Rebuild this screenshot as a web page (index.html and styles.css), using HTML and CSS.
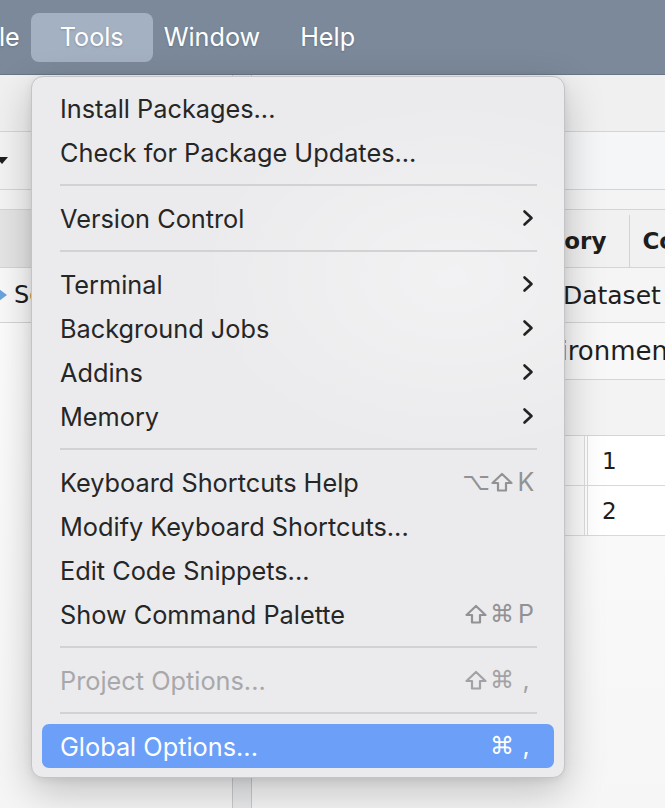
FILE: index.html
```html
<!DOCTYPE html>
<html lang="en">
<head>
<meta charset="utf-8">
<title>Tools menu</title>
<link rel="stylesheet" href="styles.css">
</head>
<body>
<div class="screen">
  <div class="menubar">
    <span class="mb-item first">File</span>
    <span class="mb-item active">Tools</span>
    <span class="mb-item">Window</span>
    <span class="mb-item">Help</span>
  </div>

  <div class="workspace">
    <div class="pane pane-left">
      <div class="row toolbar"></div>
      <div class="row subbar"><span class="caret"></span></div>
      <div class="row thin"></div>
      <div class="row tabs tabs-left"></div>
      <div class="row files"><span class="tri"></span><span class="files-text">Source on Save</span></div>
    </div>
    <div class="splitter"></div>
    <div class="pane pane-right">
      <div class="row toolbar toolbar-right"></div>
      <div class="row subbar subbar-right"></div>
      <div class="row thin"></div>
      <div class="row tabs tabs-right">
        <span class="tab">Environment</span>
        <span class="tab">History</span>
        <span class="tab">Connections</span>
      </div>
      <div class="row import"><span>Import Dataset</span></div>
      <div class="row envrow"><span>Global Environment</span></div>
      <div class="row empty"></div>
      <div class="trow"><span class="c1"></span><span class="c2">1</span></div>
      <div class="trow"><span class="c1"></span><span class="c2">2</span></div>
    </div>
  </div>

  <div class="menu">
    <div class="item"><span class="label">Install Packages...</span></div>
    <div class="item"><span class="label">Check for Package Updates...</span></div>
    <div class="sep"></div>
    <div class="item"><span class="label">Version Control</span><svg class="chev" viewBox="0 0 12 18" width="12" height="18"><path d="M2.5 2.5 L9.5 9 L2.5 15.5"/></svg></div>
    <div class="sep"></div>
    <div class="item"><span class="label">Terminal</span><svg class="chev" viewBox="0 0 12 18" width="12" height="18"><path d="M2.5 2.5 L9.5 9 L2.5 15.5"/></svg></div>
    <div class="item"><span class="label">Background Jobs</span><svg class="chev" viewBox="0 0 12 18" width="12" height="18"><path d="M2.5 2.5 L9.5 9 L2.5 15.5"/></svg></div>
    <div class="item"><span class="label">Addins</span><svg class="chev" viewBox="0 0 12 18" width="12" height="18"><path d="M2.5 2.5 L9.5 9 L2.5 15.5"/></svg></div>
    <div class="item"><span class="label">Memory</span><svg class="chev" viewBox="0 0 12 18" width="12" height="18"><path d="M2.5 2.5 L9.5 9 L2.5 15.5"/></svg></div>
    <div class="sep"></div>
    <div class="item"><span class="label">Keyboard Shortcuts Help</span><span class="keys"><span class="mod">⌥</span><span class="mod"><svg class="shift" viewBox="0 0 22 20" width="22" height="20"><path d="M11 2 L20.5 11 L15 11 L15 18.5 L7 18.5 L7 11 L1.5 11 Z"/></svg></span><span class="key">K</span></span></div>
    <div class="item"><span class="label">Modify Keyboard Shortcuts...</span></div>
    <div class="item"><span class="label">Edit Code Snippets...</span></div>
    <div class="item"><span class="label">Show Command Palette</span><span class="keys"><span class="mod"><svg class="shift" viewBox="0 0 22 20" width="22" height="20"><path d="M11 2 L20.5 11 L15 11 L15 18.5 L7 18.5 L7 11 L1.5 11 Z"/></svg></span><span class="mod">⌘</span><span class="key">P</span></span></div>
    <div class="sep"></div>
    <div class="item disabled"><span class="label">Project Options...</span><span class="keys"><span class="mod"><svg class="shift" viewBox="0 0 22 20" width="22" height="20"><path d="M11 2 L20.5 11 L15 11 L15 18.5 L7 18.5 L7 11 L1.5 11 Z"/></svg></span><span class="mod">⌘</span><span class="key">,</span></span></div>
    <div class="sep"></div>
    <div class="item selected"><span class="label">Global Options...</span><span class="keys"><span class="mod">⌘</span><span class="key">,</span></span></div>
  </div>
</div>
</body>
</html>
```

FILE: styles.css
```css
html, body {
  margin: 0;
  padding: 0;
}

body {
  width: 665px;
  height: 808px;
  overflow: hidden;
  background: #fafafa;
  font-family: "Inter", "Liberation Sans", sans-serif;
}

.screen {
  position: relative;
  width: 665px;
  height: 808px;
  overflow: hidden;
  display: flex;
  flex-direction: column;
  background: #fbfbfb;
}

/* ---------- macOS menu bar ---------- */
.menubar {
  height: 74px;
  flex-shrink: 0;
  display: flex;
  align-items: center;
  background: #7b899a;
  border-bottom: 1px solid #6a7686;
  color: #ffffff;
  font-family: "Inter", "Liberation Sans", sans-serif;
  font-size: 25.2px;
  white-space: nowrap;
}

.mb-item {
  padding: 0 20px;
  line-height: 49px;
  border-radius: 8px;
  text-shadow: 0 1px 2px rgba(40, 50, 65, 0.25);
}

.mb-item.first {
  margin-left: -42px;
}

.mb-item.active {
  background: #a4b1c2;
  padding: 0 29px;
  margin: 0 -9px;
}

/* ---------- background IDE window ---------- */
.workspace {
  flex: 1;
  display: flex;
  min-height: 0;
}

.pane {
  display: flex;
  flex-direction: column;
  overflow: hidden;
  background: linear-gradient(#ffffff, #f6f6f6);
}

.pane-left {
  width: 232px;
  flex-shrink: 0;
}

.splitter {
  width: 18px;
  flex-shrink: 0;
  background: #e9ebed;
  border-left: 1px solid #c9cacc;
  border-right: 1px solid #c9cacc;
}

.pane-right {
  flex: 1;
  min-width: 0;
}

.row {
  display: flex;
  align-items: center;
  flex-shrink: 0;
  white-space: nowrap;
  border-bottom: 1px solid #d5d5d5;
  font-family: "DejaVu Sans", "Liberation Sans", sans-serif;
  font-size: 23px;
  color: #1e1e1e;
}

.toolbar {
  height: 56px;
  background: #f1f0f0;
}

.subbar {
  height: 57px;
  background: #f3f3f3;
}

.subbar-right {
  background: #f4f6f8;
}

.thin {
  height: 19px;
  background: #f4f4f4;
}

.tabs {
  height: 57px;
}

.tabs-left {
  background: #e5e5e5;
}

.tabs-right {
  background: #f1f1f1;
  padding-left: 47px;
  font-weight: bold;
  align-items: stretch;
}

.tab {
  display: flex;
  align-items: center;
  padding: 0 23px 0 12px;
  border-right: 1px solid #d2d2d2;
  margin-top: 5px;
}

.files {
  height: 54px;
  background: #f9f9f9;
}

.caret {
  width: 0;
  height: 0;
  margin-left: -4px;
  border-left: 6px solid transparent;
  border-right: 6px solid transparent;
  border-top: 7px solid #1e1e1e;
}

.tri {
  width: 0;
  height: 0;
  margin-left: -1px;
  border-top: 6px solid transparent;
  border-bottom: 6px solid transparent;
  border-left: 8px solid #6aa3dc;
}

.files-text {
  margin-left: 7px;
  font-size: 24px;
}

.import {
  height: 54px;
  background: #f5f5f5;
  padding-left: 220px;
  font-size: 25px;
}

.envrow {
  height: 56px;
  background: #f8f8f8;
  padding-left: 169px;
  font-size: 26px;
}

.empty {
  height: 55px;
  background: #f3f3f3;
}

.trow {
  display: flex;
  height: 49px;
  flex-shrink: 0;
  border-bottom: 1px solid #d9d9d9;
  background: #ffffff;
  font-family: "DejaVu Sans", "Liberation Sans", sans-serif;
  font-size: 23px;
  color: #1e1e1e;
}

.c1 {
  width: 332px;
  flex-shrink: 0;
  border-right: 1px solid #dcdcdc;
  background: #fafafa;
}

.c2 {
  display: flex;
  align-items: center;
  margin-left: 2px;
  padding-left: 14px;
  border-left: 1px solid #dcdcdc;
  flex: 1;
}

/* ---------- dropdown menu (overlay) ---------- */
.menu {
  position: absolute;
  left: 31px;
  top: 76px;
  width: 512px;
  padding: 9px 10px;
  background:
    radial-gradient(ellipse 260px 180px at 420px 200px, rgba(255, 255, 255, 0.35), rgba(255, 255, 255, 0)),
    #ebebed;
  border: 1px solid #c4c4c6;
  border-radius: 12px;
  box-shadow: 0 14px 40px rgba(0, 0, 0, 0.22), 0 2px 8px rgba(0, 0, 0, 0.08);
  font-family: "Inter", "Liberation Sans", sans-serif;
  font-size: 25.3px;
  color: #262626;
}

.item {
  height: 44px;
  display: flex;
  align-items: center;
  justify-content: space-between;
  padding: 0 17px 0 18px;
  border-radius: 7px;
  white-space: nowrap;
}

.item.disabled {
  color: #a8a8aa;
}

.item.selected {
  background: #6b9ff8;
  color: #ffffff;
}

.sep {
  height: 2px;
  margin: 10px 17px 10px 18px;
  background: #d2d2d4;
}

.chev {
  margin-right: 3px;
}

.chev path {
  fill: none;
  stroke: #222222;
  stroke-width: 2.6;
  stroke-linecap: round;
  stroke-linejoin: round;
}

.keys {
  display: flex;
  align-items: center;
  color: #929294;
  font-size: 25px;
}

.item.disabled .keys {
  color: #a2a2a4;
}

.item.selected .keys {
  color: #ffffff;
}

.mod {
  width: 26px;
  display: flex;
  justify-content: center;
  align-items: center;
  font-family: "DejaVu Sans", sans-serif;
  font-size: 24px;
}

.shift path {
  fill: none;
  stroke: currentColor;
  stroke-width: 2.2;
  stroke-linejoin: round;
}

.key {
  width: 22px;
  text-align: center;
}
```
